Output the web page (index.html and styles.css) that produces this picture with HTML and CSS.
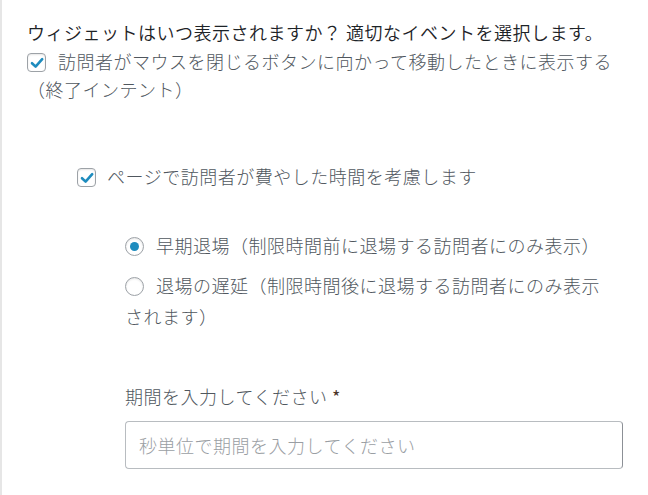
FILE: index.html
```html
<!DOCTYPE html>
<html lang="ja">
<head>
<meta charset="utf-8">
<link rel="stylesheet" href="styles.css">
</head>
<body>
<div class="panel">
  <div class="title">ウィジェットはいつ表示されますか？ 適切なイベントを選択します。</div>
  <div class="row exit"><span class="check"><svg viewBox="0 0 18 18" width="18" height="18"><path d="M4 9.2 L7.6 12.6 L14.2 5.2" fill="none" stroke="#1e8cbe" stroke-width="2.6" stroke-linecap="round" stroke-linejoin="round"/></svg></span>訪問者がマウスを閉じるボタンに向かって移動したときに表示する（終了インテント）</div>
  <div class="row time"><span class="check"><svg viewBox="0 0 18 18" width="18" height="18"><path d="M4 9.2 L7.6 12.6 L14.2 5.2" fill="none" stroke="#1e8cbe" stroke-width="2.6" stroke-linecap="round" stroke-linejoin="round"/></svg></span>ページで訪問者が費やした時間を考慮します</div>
  <div class="radios">
    <div class="row radio-row first"><span class="radio on"></span>早期退場（制限時間前に退場する訪問者にのみ表示）</div>
    <div class="row radio-row"><span class="radio"></span>退場の遅延（制限時間後に退場する訪問者にのみ表示されます）</div>
    <div class="label">期間を入力してください <span class="req">*</span></div>
    <div class="input">秒単位で期間を入力してください</div>
  </div>
</div>
</body>
</html>
```

FILE: styles.css
```css
html, body {
  margin: 0;
  padding: 0;
  background: #fff;
}
body {
  font-family: "Noto Sans CJK JP", "Noto Sans", sans-serif;
  font-size: 18px;
  font-weight: 300;
  letter-spacing: 0.5px;
  color: #50575e;
}
.panel {
  border-left: 2px solid #e6e6e6;
  padding: 18px 0 0 25px;
  width: 589px;
  height: 477px;
}
.title {
  line-height: 28px;
  color: #1d2327;
  font-weight: 350;
  margin-bottom: 1px;
}
.row {
  line-height: 28px;
}
.check, .radio {
  display: inline-block;
  box-sizing: border-box;
  width: 19px;
  height: 19px;
  border: 1px solid #9da2a7;
  background: #fff;
  box-shadow: inset 0 1px 2px rgba(0,0,0,0.1);
  vertical-align: -3px;
  margin-right: 12px;
  position: relative;
}
.check {
  border-radius: 4px;
}
.check svg {
  position: absolute;
  left: -0.5px;
  top: -0.5px;
}
.radio {
  border-radius: 50%;
}
.radio.on::after {
  content: "";
  position: absolute;
  left: 4px;
  top: 4px;
  width: 9px;
  height: 9px;
  border-radius: 50%;
  background: #1e8cbe;
}
.time {
  margin-top: 59px;
  padding-left: 50px;
}
.time .check {
  margin-right: 11px;
}
.radios {
  padding-left: 98px;
}
.radio-row {
  line-height: 31px;
}
.radio-row.first {
  margin-top: 40px;
  margin-bottom: 9px;
}
.label {
  margin-top: 50px;
  line-height: 28px;
}
.req {
  color: #4a3428;
  font-weight: 400;
}
.input {
  margin-top: 11px;
  box-sizing: border-box;
  width: 498px;
  height: 48px;
  border: 1px solid #b8bcc0;
  border-right-color: #8c9096;
  border-radius: 4px;
  padding-left: 13px;
  line-height: 46px;
  color: #9a9ea3;
}
```
